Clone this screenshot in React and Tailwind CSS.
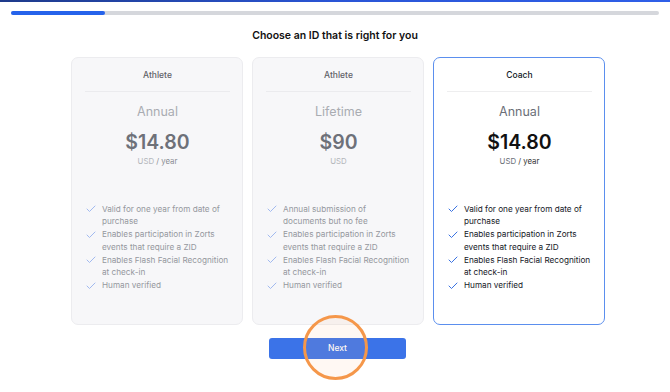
import { Check } from 'lucide-react';

const plans = [
  {
    role: 'Athlete',
    term: 'Annual',
    price: '$14.80',
    unit: 'year',
    features: [
      'Valid for one year from date of purchase',
      'Enables participation in Zorts events that require a ZID',
      'Enables Flash Facial Recognition at check-in',
      'Human verified',
    ],
  },
  {
    role: 'Athlete',
    term: 'Lifetime',
    price: '$90',
    unit: null,
    features: [
      'Annual submission of documents but no fee',
      'Enables participation in Zorts events that require a ZID',
      'Enables Flash Facial Recognition at check-in',
      'Human verified',
    ],
  },
  {
    role: 'Coach',
    term: 'Annual',
    price: '$14.80',
    unit: 'year',
    features: [
      'Valid for one year from date of purchase',
      'Enables participation in Zorts events that require a ZID',
      'Enables Flash Facial Recognition at check-in',
      'Human verified',
    ],
    selected: true,
  },
];

const PlanCard = ({ plan }) => {
  const on = plan.selected;
  return (
    <div
      className={`w-[172px] h-[268px] rounded-[7px] pl-[13px] pr-[12px] pt-[10px] ${
        on ? 'bg-white border-[1.5px] border-[#5b8fee]' : 'bg-[#f7f7f9] border border-[#ececef]'
      }`}
    >
      <div
        className={`text-center text-[8.5px] leading-[14px] font-medium pb-[9px] border-b ${
          on ? 'text-[#111827] border-[#eeeeef]' : 'text-[#5f6167] border-[#ebebee]'
        }`}
      >
        {plan.role}
      </div>
      <div className={`mt-[11px] text-center text-[12.5px] leading-[18px] ${on ? 'text-[#6b6f78]' : 'text-[#a9acb2]'}`}>
        {plan.term}
      </div>
      <div className={`mt-[12px] text-center text-[19.5px] leading-none font-semibold ${on ? 'text-[#111]' : 'text-[#6e7179]'}`}>
        {plan.price}
      </div>
      <div className="mt-[2px] text-center text-[7.8px] leading-[12px]">
        <span className={on ? 'text-[#6b6f78]' : 'text-[#b3b6bb]'}>USD</span>
        {plan.unit && <span className={on ? 'text-[#333]' : 'text-[#8a8d93]'}> / {plan.unit}</span>}
      </div>
      <ul className="mt-[36px]">
        {plan.features.map((f) => (
          <li key={f} className="flex gap-[5px] text-[8.2px] leading-[12.8px]">
            <Check
              size={12}
              strokeWidth={1.9}
              className={`mt-[0.5px] shrink-0 ${on ? 'text-[#2f6ae0]' : 'text-[#9db6ef]'}`}
            />
            <span className={on ? 'text-[#15181f]' : 'text-[#95989e]'}>{f}</span>
          </li>
        ))}
      </ul>
    </div>
  );
};

const App = () => {
  return (
    <div className="relative w-[670px] h-[392px] bg-white overflow-hidden font-['Inter',sans-serif]">
      <div className="h-[2px] bg-gradient-to-r from-[#1e3a8a] via-[#2a55d6] to-[#2f5fe8]" />
      <div className="mx-[11px] mt-[9px] h-[4px] rounded-full bg-[#d5d7dc]">
        <div className="w-[94px] h-full rounded-full bg-[#2563eb]" />
      </div>
      <h1 className="mt-[11px] text-center text-[10.5px] leading-[20px] font-semibold text-[#111]">
        Choose an ID that is right for you
      </h1>
      <div className="mt-[11px] flex gap-[9px] pl-[71px]">
        {plans.map((p, i) => (
          <PlanCard key={i} plan={p} />
        ))}
      </div>
      <div className="mt-[13px] flex pl-[269px]">
        <button className="w-[137px] h-[21px] rounded-[3px] bg-[#3b73e8] text-white text-[8.5px] font-medium">
          Next
        </button>
      </div>
      <div className="absolute left-[303px] top-[315px] w-[65px] h-[65px] rounded-full border-[3px] border-[#f5974a] bg-[#ffb98a]/10 pointer-events-none" />
    </div>
  );
};

export default App;
